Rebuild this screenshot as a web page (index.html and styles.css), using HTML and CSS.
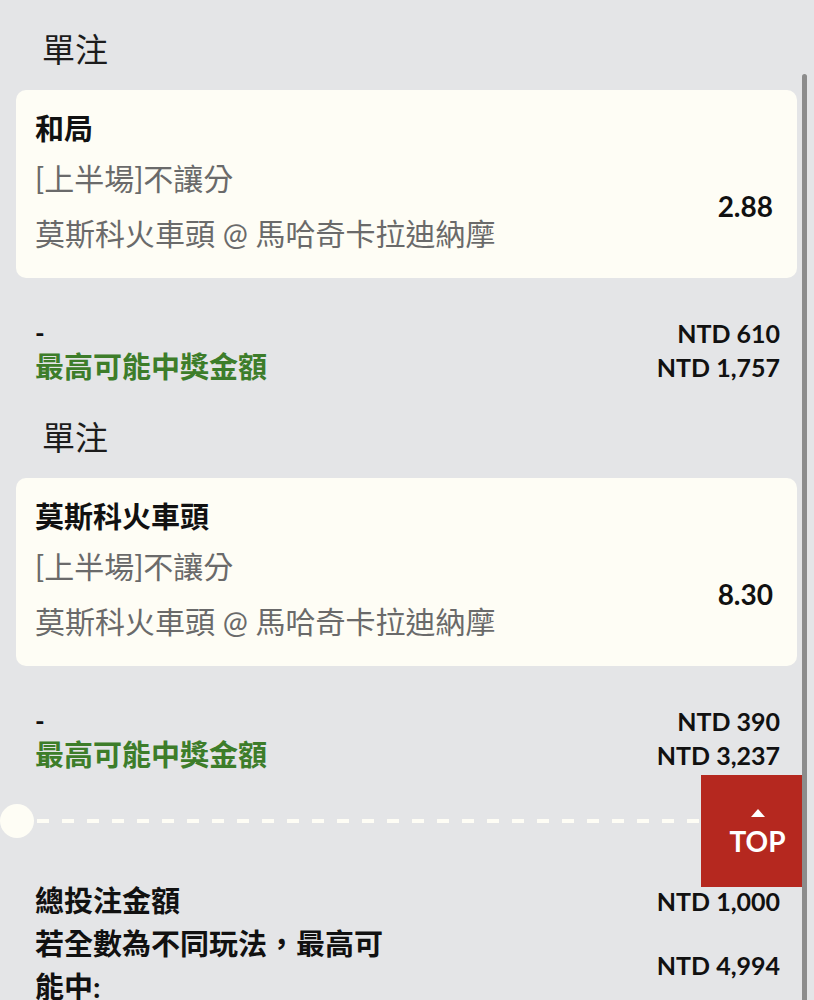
FILE: index.html
```html
<!DOCTYPE html>
<html lang="zh-Hant">
<head>
  <meta charset="UTF-8" />
  <meta name="viewport" content="width=device-width, initial-scale=1.0" />
  <title>注單</title>
  <link rel="stylesheet" href="styles.css">
</head>
<body>
  <!-- Bet slip -->
  <main class="slip">
    <section class="bet">
      <h2 class="bet-type">單注</h2>
      <div class="bet-card">
        <div class="pick">和局</div>
        <div class="bet-body">
          <div class="bet-info">
            <div>[上半場]不讓分</div>
            <div>莫斯科火車頭 @ 馬哈奇卡拉迪納摩</div>
          </div>
          <div class="odds">2.88</div>
        </div>
      </div>
      <div class="bet-stake">
        <span class="stake-label">-</span>
        <span class="amount">NTD 610</span>
        <span class="win-label">最高可能中獎金額</span>
        <span class="amount">NTD 1,757</span>
      </div>
    </section>

    <section class="bet">
      <h2 class="bet-type">單注</h2>
      <div class="bet-card">
        <div class="pick">莫斯科火車頭</div>
        <div class="bet-body">
          <div class="bet-info">
            <div>[上半場]不讓分</div>
            <div>莫斯科火車頭 @ 馬哈奇卡拉迪納摩</div>
          </div>
          <div class="odds">8.30</div>
        </div>
      </div>
      <div class="bet-stake">
        <span class="stake-label">-</span>
        <span class="amount">NTD 390</span>
        <span class="win-label">最高可能中獎金額</span>
        <span class="amount">NTD 3,237</span>
      </div>
    </section>

    <!-- Ticket tear line -->
    <div class="divider">
      <span class="notch"></span>
      <span class="dashes"></span>
    </div>

    <!-- Totals -->
    <div class="totals">
      <div class="total-label">總投注金額</div>
      <div class="amount">NTD 1,000</div>
      <div class="total-label">若全數為不同玩法，最高可能中:</div>
      <div class="amount">NTD 4,994</div>
    </div>
  </main>

  <a class="to-top" href="#">
    <span class="arrow"></span>
    <span>TOP</span>
  </a>

  <div class="scroll-track"><div class="scroll-thumb"></div></div>
</body>
</html>
```

FILE: styles.css
```css
/* Reset and Base Styles */
* {
  box-sizing: border-box;
  margin: 0;
  padding: 0;
}
body {
  background-color: #e4e5e7;
  color: #111;
  font-family: Lato, "Noto Sans CJK TC", sans-serif;
}

/* Slip container */
.slip {
  padding: 28px 17px 0 16px;
}

.bet-type {
  font-family: "Noto Sans CJK TC", sans-serif;
  font-size: 33px;
  font-weight: 400;
  line-height: 40px;
  color: #1c1c1c;
  padding-left: 26px;
  margin-bottom: 22px;
}
.bet + .bet .bet-type {
  margin-top: 32px;
}

/* Selection card */
.bet-card {
  background: #fefdf5;
  border-radius: 10px;
  padding: 20px 24px 17px 19px;
}
.pick {
  font-size: 29px;
  font-weight: 700;
  line-height: 38px;
}
.bet-body {
  display: flex;
  align-items: center;
  justify-content: space-between;
  margin-top: 3px;
}
.bet-info {
  color: #6a6a6a;
  font-size: 30px;
  line-height: 55px;
}
.odds {
  font-size: 28px;
  font-weight: 700;
}

/* Stake rows */
.bet-stake {
  display: grid;
  grid-template-columns: 1fr auto;
  padding: 38px 17px 0 19px;
  font-weight: 700;
  line-height: 34px;
}
.stake-label {
  font-size: 26px;
}
.win-label {
  color: #3d7d2a;
  font-size: 29px;
}
.amount {
  font-size: 25px;
  font-weight: 700;
  text-align: right;
}

/* Dashed divider */
.divider {
  display: flex;
  align-items: center;
  margin: 32px 0 0 -16px;
}
.notch {
  width: 34px;
  height: 34px;
  border-radius: 50%;
  background: #fefdf5;
  flex: 0 0 auto;
}
.dashes {
  flex: 1;
  height: 4px;
  margin-left: 3px;
  background: repeating-linear-gradient(90deg, #fefdf5 0 12px, transparent 12px 25px);
}

/* Totals */
.totals {
  display: grid;
  grid-template-columns: 370px 1fr;
  align-items: center;
  padding: 41px 17px 0 19px;
  font-weight: 700;
}
.total-label {
  font-size: 29px;
  line-height: 43px;
}

/* Back to top */
.to-top {
  position: fixed;
  left: 701px;
  top: 775px;
  width: 113px;
  height: 112px;
  background: #b5281f;
  color: #fff;
  text-decoration: none;
  display: flex;
  flex-direction: column;
  align-items: center;
  justify-content: center;
  font-size: 28px;
  font-weight: 700;
  line-height: 32px;
  padding-top: 4px;
}
.to-top .arrow {
  width: 0;
  height: 0;
  border-left: 7px solid transparent;
  border-right: 7px solid transparent;
  border-bottom: 8px solid #fff;
  margin-bottom: 8px;
}

/* Scroll indicator */
.scroll-track {
  position: fixed;
  top: 0;
  right: 0;
  bottom: 0;
  width: 12px;
  background: #e4e5e7;
}
.scroll-thumb {
  position: absolute;
  top: 74px;
  bottom: 0;
  left: 0;
  width: 5px;
  border-radius: 3px 3px 0 0;
  background: #8c8c8c;
}
```
